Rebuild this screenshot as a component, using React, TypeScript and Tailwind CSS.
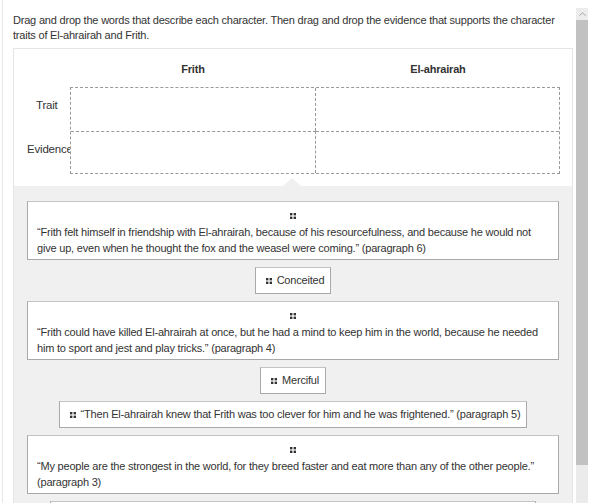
import type { ReactNode } from "react";

function Grip() {
  return (
    <svg width="6" height="6" viewBox="0 0 6 6" aria-hidden="true" className="shrink-0">
      <rect x="0" y="0" width="2.4" height="2.4" fill="#333" />
      <rect x="3.6" y="0" width="2.4" height="2.4" fill="#333" />
      <rect x="0" y="3.6" width="2.4" height="2.4" fill="#333" />
      <rect x="3.6" y="3.6" width="2.4" height="2.4" fill="#333" />
    </svg>
  );
}

function BlockTile({ children }: { children: ReactNode }) {
  return (
    <div className="w-full shrink-0 border border-[#a9a9a9] border-t-[#c4c4c4] bg-white pt-[10px] pb-[3px]">
      <div className="flex h-[8px] items-center justify-center">
        <Grip />
      </div>
      <p className="mt-[4px] pl-[9px] pr-[20px] leading-[16px]">{children}</p>
    </div>
  );
}

function InlineTile({ children }: { children: ReactNode }) {
  return (
    <div className="flex h-[27px] shrink-0 items-center gap-[5px] border border-[#a9a9a9] border-t-[#c4c4c4] bg-white pl-[10px] pr-[6px] whitespace-nowrap">
      <Grip />
      <span>{children}</span>
    </div>
  );
}

const evidence = [
  {
    kind: "block",
    text: "“Frith felt himself in friendship with El-ahrairah, because of his resourcefulness, and because he would not give up, even when he thought the fox and the weasel were coming.” (paragraph 6)",
  },
  { kind: "inline", text: "Conceited" },
  {
    kind: "block",
    text: "“Frith could have killed El-ahrairah at once, but he had a mind to keep him in the world, because he needed him to sport and jest and play tricks.” (paragraph 4)",
  },
  { kind: "inline", text: "Merciful" },
  {
    kind: "inline",
    text: "“Then El-ahrairah knew that Frith was too clever for him and he was frightened.” (paragraph 5)",
  },
  {
    kind: "block",
    text: "“My people are the strongest in the world, for they breed faster and eat more than any of the other people.” (paragraph 3)",
  },
  {
    kind: "inline",
    text: "“El-ahrairah's people were so many that they took food from all the other creatures.” (paragraph 2)",
  },
];

export default function App() {
  return (
    <div className="flex h-[503px] w-[591px] overflow-hidden bg-white font-['Liberation_Sans',Arial,sans-serif] text-[11px] tracking-[-0.2px] text-[#333]">
      <div className="ml-[2px] w-[574px] shrink-0 overflow-hidden border-l border-[#e6e6e6] pt-[13px] pl-[10px]">
        <p className="w-[560px] leading-[15px]">
          Drag and drop the words that describe each character. Then drag and drop the evidence that
          supports the character traits of El-ahrairah and Frith.
        </p>

        <div className="mt-[5px] w-[560px] border border-[#e5e5e5]">
          <div className="px-[12px] pb-[12px]">
            <div className="flex h-[38px] items-center pt-[2px] pl-[44px] font-bold">
              <div className="w-[246px] text-center">Frith</div>
              <div className="w-[244px] text-center">El-ahrairah</div>
            </div>

            <div className="flex">
              <div className="flex w-[44px] shrink-0 flex-col pt-[1px] text-[11.5px]">
                <div className="flex h-[43px] items-center pb-[8px] pl-[10px] whitespace-nowrap">
                  Trait
                </div>
                <div className="flex h-[43px] items-center pb-[6px] pl-[1px] whitespace-nowrap">
                  Evidence
                </div>
              </div>
              <div className="relative z-10 grid w-[490px] grid-cols-[245px_1fr] border border-dashed border-[#9a9a9a] bg-white">
                <div className="h-[43px] border-r border-dashed border-[#9a9a9a]" />
                <div className="h-[43px]" />
                <div className="h-[42px] border-t border-r border-dashed border-[#9a9a9a]" />
                <div className="h-[42px] border-t border-dashed border-[#9a9a9a]" />
              </div>
            </div>
          </div>

          <div className="relative flex h-[330px] flex-col items-center gap-[7px] bg-[#f0f0f0] px-[13px] pt-[15px]">
            <div className="absolute -top-[8px] left-[269px] h-0 w-0 border-x-[9px] border-b-[8px] border-x-transparent border-b-[#f0f0f0]" />
            {evidence.map((item) =>
              item.kind === "block" ? (
                <BlockTile key={item.text}>{item.text}</BlockTile>
              ) : (
                <InlineTile key={item.text}>{item.text}</InlineTile>
              ),
            )}
          </div>
        </div>
      </div>

      <div className="flex w-[12px] shrink-0 flex-col pt-[8px]">
        <div className="flex h-[12px] items-center justify-center bg-[#ececec]">
          <svg width="7" height="4" viewBox="0 0 7 4" aria-hidden="true">
            <path d="M0.5 3.5 L3.5 0.8 L6.5 3.5" fill="none" stroke="#a3a3a3" strokeWidth="1" />
          </svg>
        </div>
        <div className="h-[445px] bg-[#c1c1c1]" />
        <div className="flex-1 bg-[#ebebeb]" />
      </div>
      <div className="w-[3px] shrink-0" />
    </div>
  );
}
